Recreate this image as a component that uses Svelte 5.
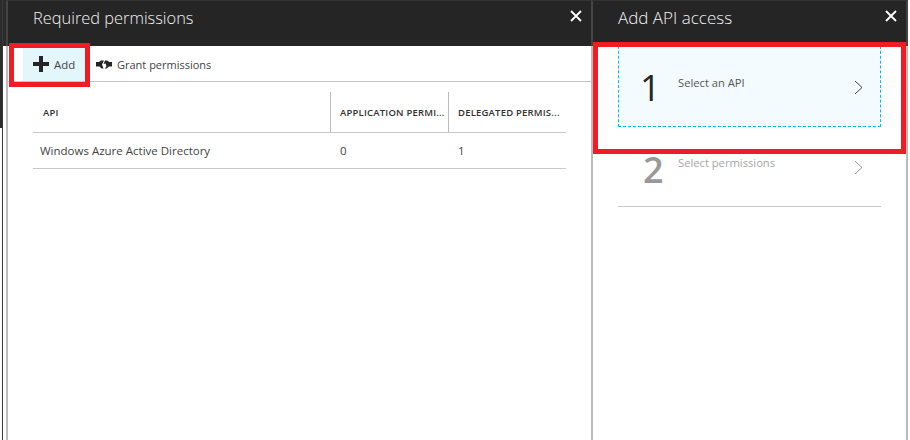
<script>
  let columns = ["API", "APPLICATION PERMI...", "DELEGATED PERMIS..."];
  let rows = [{ name: "Windows Azure Active Directory", app: 0, delegated: 1 }];
  let steps = [
    { n: 1, label: "Select an API", active: true },
    { n: 2, label: "Select permissions", active: false },
  ];
</script>

<div class="page">
  <div class="gutter"></div>

  <section class="blade first">
    <header>
      <h1>Required permissions</h1>
      <svg class="close" viewBox="0 0 12 12"><path d="M1 1l10 10M11 1L1 11" /></svg>
    </header>
    <div class="toolbar">
      <div class="tool add">
        <svg class="plus" viewBox="0 0 16 16"><path d="M6 0h4v6h6v4h-6v6H6v-6H0V6h6z" /></svg>
        <span>Add</span>
      </div>
      <div class="tool grant">
        <svg class="shake" viewBox="0 0 16 9">
          <path d="M0 2H3L5 .5H8L6 4.500 7.500 8.500H5.500L3.500 6.500H0z" />
          <path d="M16 2H13.500L11 .5H9L7.500 4 9.500 3.500 10.500 6 9 8.500H10.500L13 6.500H16z" />
        </svg>
        <span>Grant permissions</span>
      </div>
    </div>
    <div class="table">
      <div class="row head">
        {#each columns as col}
          <div class="cell">{col}</div>
        {/each}
      </div>
      {#each rows as row}
        <div class="row body">
          <div class="cell">{row.name}</div>
          <div class="cell">{row.app}</div>
          <div class="cell">{row.delegated}</div>
        </div>
      {/each}
    </div>
  </section>

  <section class="blade second">
    <header>
      <h1>Add API access</h1>
      <svg class="close" viewBox="0 0 12 12"><path d="M1 1l10 10M11 1L1 11" /></svg>
    </header>
    <div class="steps">
      {#each steps as step}
        <div class="step" class:active={step.active}>
          <div class="num">{step.n}</div>
          <div class="label">{step.label}</div>
          <svg class="chevron" viewBox="0 0 9 15"><path d="M1 1l7 6.500-7 6.500" /></svg>
        </div>
      {/each}
    </div>
  </section>

  <div class="mark mark-add"></div>
  <div class="mark mark-step"></div>
</div>

<style>
  :global(body) {
    margin: 0;
    background: #fff;
  }

  .page {
    position: relative;
    display: flex;
    width: 910px;
    height: 440px;
    overflow: hidden;
    background: #fff;
    font-family: "Open Sans", "Liberation Sans", sans-serif;
    color: #444;
  }

  .gutter {
    width: 6px;
    height: 46px;
    background: #2b2b2b;
    flex: none;
    position: relative;
  }

  /* dark edge of the portal behind the blades */
  .gutter::before {
    content: "";
    position: absolute;
    left: 0;
    top: 0;
    width: 2px;
    height: 128px;
    background: #2b2b2b;
  }

  .gutter::after {
    content: "";
    position: absolute;
    left: 2px;
    top: 0;
    width: 1px;
    height: 440px;
    background: #3a3a3a;
  }

  .blade {
    box-sizing: border-box;
    height: 440px;
    flex: none;
    border-left: 2px solid #bcbcbc;
    background: #fff;
    position: relative;
  }

  .first {
    width: 585px;
  }

  .second {
    width: 317px;
    border-right: 2px solid #bcbcbc;
  }

  header {
    box-sizing: border-box;
    height: 46px;
    background: #252525;
    display: flex;
    justify-content: space-between;
    padding: 0 9px 0 25px;
    margin: 0 -2px;
    border-left: 2px solid #444;
    border-top: 1px solid #333;
  }

  .second header {
    border-right: 2px solid #444;
    padding: 0 7px 0 25px;
  }

  h1 {
    margin: 0;
    font-size: 16.4px;
    font-weight: 300;
    line-height: 33px;
    color: #f2f2f2;
  }

  .second h1 {
    font-size: 17px;
  }

  .close {
    width: 12px;
    height: 12px;
    margin-top: 9px;
    margin-right: 2px;
  }

  .close path {
    fill: none;
    stroke: #fff;
    stroke-width: 1.8;
  }

  .toolbar {
    height: 35px;
    border-bottom: 1px solid #c4c4c4;
    display: flex;
    padding-left: 15px;
    font-size: 11px;
  }

  .tool {
    display: flex;
    align-items: center;
    height: 35px;
  }

  .tool span {
    padding-top: 2px;
  }

  .add {
    width: 67px;
    box-sizing: border-box;
    padding-left: 10px;
    gap: 5px;
    background: #e3f6fc;
  }

  .add span {
    font-size: 11.4px;
  }

  .plus {
    width: 16px;
    height: 16px;
    fill: #252525;
  }

  .grant {
    margin-left: 6px;
    gap: 5px;
  }

  .shake {
    width: 16px;
    height: 9px;
    margin-top: 1px;
    fill: #252525;
  }

  .table {
    margin: 10px 0 0 25px;
    width: 533px;
    font-size: 11.5px;
  }

  .row {
    display: grid;
    grid-template-columns: 297px 118px 118px;
    border-bottom: 1px solid #c8c8c8;
  }

  .head {
    height: 40px;
    font-size: 9.5px;
    font-weight: 600;
    color: #333;
    letter-spacing: 0.2px;
  }

  .head .cell {
    line-height: 41px;
    padding-left: 10px;
    white-space: nowrap;
    overflow: hidden;
  }

  .head .cell + .cell {
    border-left: 1px solid #bcbcbc;
    padding-left: 9px;
  }

  .body {
    height: 35px;
    line-height: 36px;
  }

  .body .cell {
    padding-left: 7px;
  }

  .body .cell + .cell {
    padding-left: 10px;
  }

  .steps {
    padding: 0 25px;
  }

  .step {
    box-sizing: border-box;
    height: 80px;
    display: flex;
    position: relative;
    border-bottom: 1px solid #c8c8c8;
    font-size: 11.2px;
    color: #a6a6a6;
  }

  .step.active {
    height: 81px;
    background: #f3fbfe;
    border: 1px dashed #00bcf2;
    border-top: 0;
    color: #555;
  }

  .num {
    width: 60px;
    padding-left: 25px;
    padding-top: 20px;
    box-sizing: border-box;
    font-size: 36px;
    font-weight: 600;
    line-height: 46px;
    color: #999;
  }

  .active .num {
    color: #252525;
    font-weight: 400;
    width: 59px;
    padding-left: 21px;
    padding-top: 19px;
  }

  .label {
    line-height: 14px;
    padding-top: 29px;
  }

  .active .label {
    padding-top: 30px;
  }

  .chevron {
    position: absolute;
    left: 236px;
    top: 33px;
    width: 9px;
    height: 15px;
    fill: none;
    stroke: #9a9a9a;
    stroke-width: 1;
  }

  .active .chevron {
    left: 235px;
    top: 34px;
    stroke: #444;
  }

  .mark {
    position: absolute;
    box-sizing: border-box;
    border: 5px solid #ee1c25;
  }

  .mark-add {
    left: 9px;
    top: 43px;
    width: 81px;
    height: 44px;
  }

  .mark-step {
    left: 593px;
    top: 42px;
    width: 313px;
    height: 112px;
  }
</style>
